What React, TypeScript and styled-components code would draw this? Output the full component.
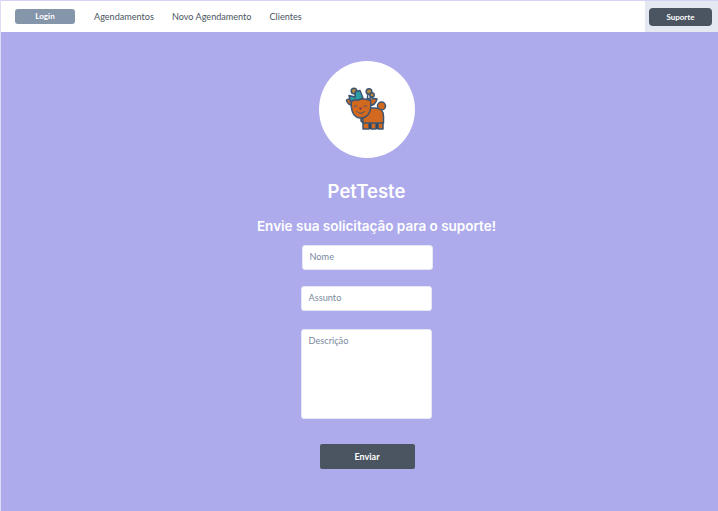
import { createGlobalStyle, styled } from 'styled-components';

const GlobalStyle = createGlobalStyle`
  html, body {
    margin: 0;
    padding: 0;
    background: #aeabec;
  }
  * {
    box-sizing: border-box;
  }
`;

const Page = styled.div`
  width: 718px;
  height: 511px;
  overflow: hidden;
  display: flex;
  flex-direction: column;
  background: #aeabec;
  border-left: 1px solid #dcdcf4;
  font-family: Lato, 'Liberation Sans', sans-serif;
`;

const Header = styled.header`
  height: 32px;
  flex: none;
  display: flex;
  align-items: stretch;
  background: #fff;
  border-top: 1px solid #d4d2f5;
`;

const Nav = styled.nav`
  flex: 1;
  display: flex;
  align-items: center;
  padding: 0 0 1px 14px;
`;

const LoginButton = styled.button`
  width: 60px;
  height: 15px;
  margin-right: 19px;
  padding: 0;
  border: 0;
  border-radius: 3px;
  background: #8696aa;
  color: #fff;
  font: 700 8px Lato, sans-serif;
`;

const NavLink = styled.a`
  margin-right: 18px;
  color: #4a5560;
  font-size: 9.1px;
  white-space: nowrap;
`;

const SupportBox = styled.div`
  width: 73px;
  display: flex;
  align-items: center;
  justify-content: center;
  padding-right: 2px;
  background: #e4e8f0;
`;

const SupportButton = styled.button`
  width: 63px;
  height: 18px;
  padding: 0;
  border: 0;
  border-radius: 4px;
  background: #4a5561;
  color: #fff;
  font: 700 8px Lato, sans-serif;
`;

const Main = styled.main`
  flex: 1;
  display: flex;
  flex-direction: column;
  align-items: center;
  padding: 29px 0 0 14px;
`;

const Avatar = styled.div`
  width: 96px;
  height: 97px;
  flex: none;
  display: flex;
  align-items: center;
  justify-content: center;
  border-radius: 50%;
  background: #fff;
`;

const Brand = styled.h1`
  margin: 21px 0 0;
  color: #fff;
  font: 600 18.5px/24px Inter, sans-serif;
`;

const Subtitle = styled.h2`
  margin: 13px 0 0 20px;
  color: #fff;
  font: 600 13.5px/20px Inter, sans-serif;
  white-space: nowrap;
`;

const Form = styled.form`
  width: 133px;
  display: flex;
  flex-direction: column;
  align-items: flex-start;
  margin: 9px 0 0 1px;
`;

const TextField = styled.input<{ $shift?: number }>`
  width: 131px;
  height: 25px;
  margin: 0 0 16px ${p => p.$shift ?? 0}px;
  padding: 0 7px 3px;
  border: 1px solid #e6e8f4;
  border-radius: 3px;
  background: #fff;
  font: 9.2px Lato, sans-serif;
  &::placeholder {
    color: #7a8a9e;
    opacity: 1;
  }
`;

const TextArea = styled.textarea`
  width: 131px;
  height: 90px;
  margin-top: 2px;
  padding: 5px 7px;
  border: 1px solid #e6e8f4;
  border-radius: 3px;
  background: #fff;
  resize: none;
  display: block;
  font: 9.2px Lato, sans-serif;
  &::placeholder {
    color: #7a8a9e;
    opacity: 1;
  }
`;

const SubmitButton = styled.button`
  width: 95px;
  height: 25px;
  margin: 25px 0 0 19px;
  padding: 0;
  border: 0;
  border-radius: 2px;
  background: #4a5561;
  color: #fff;
  font: 700 9px Lato, sans-serif;
`;

const DeerIcon = styled.svg`
  flex: none;
  margin-bottom: 3px;
`;

function Deer() {
  return (
    <DeerIcon width="44" height="46" viewBox="0 0 44 46" aria-hidden="true">
      <g stroke="#3c5572" strokeWidth="1.5" strokeLinejoin="round" strokeLinecap="round">
        {/* antlers */}
        <circle cx="9" cy="6" r="2.8" fill="#b98a3c" />
        <circle cx="12" cy="9" r="2" fill="#b98a3c" />
        <circle cx="24" cy="6.5" r="2.8" fill="#b98a3c" />
        <circle cx="27" cy="10" r="2.2" fill="#b98a3c" />
        <path d="M23 9 22 15M27 12 23 14" fill="none" />
        {/* tail */}
        <circle cx="36.5" cy="21" r="4" fill="#d2691f" />
        {/* legs */}
        <path d="M16 28H38V44H33V38H31V44H26V38H24V44H18V38L16 36z" fill="#d2691f" />
        <path d="M31 38.5h2V44h-2zM24 38.5h2V44h-2z" fill="#2f4660" stroke="none" />
        {/* body */}
        <path d="M17 23H30C35 23 38.5 26 38.5 31V38H18z" fill="#d2691f" />
        {/* ears */}
        <path d="M1.5 15c3-2 6-1 7.5 1l-1 4.5C5 20.500 1.500 18 1.500 15z" fill="#d2691f" />
        <path d="M32 14c-3-1-7 0-9 2l1 4.500c4 0 7-2 8-6.500z" fill="#d2691f" />
        {/* head */}
        <path d="M6.5 15.500C12 13 20 13 25.500 15.500 26.500 24 25 32.500 16 33 7.500 33 5.500 24 6.500 15.500z" fill="#d2691f" />
        {/* bow */}
        <path d="M11 14.500 5.500 16.500 4 10.500 10 12 10.500 6.500 15 5.500 18 13 12.500 15.500z" fill="#2a9fa6" />
      </g>
      <g fill="none" stroke="#3c5572" strokeWidth="1" strokeLinecap="round">
        <path d="M9 21.500c1-1 2.200-1 3 0M19 21.500c1-1 2.200-1 3 0" />
        <path d="M12 26.500c2 2.500 5.500 2.500 7.500 0" />
      </g>
      <path d="M13.800 22.800h3.400l-1.700 2.200z" fill="#7a2f5c" />
    </DeerIcon>
  );
}

export default function App() {
  return (
    <Page>
      <GlobalStyle />
      <Header>
        <Nav>
          <LoginButton type="button">Login</LoginButton>
          <NavLink>Agendamentos</NavLink>
          <NavLink>Novo Agendamento</NavLink>
          <NavLink>Clientes</NavLink>
        </Nav>
        <SupportBox>
          <SupportButton type="button">Suporte</SupportButton>
        </SupportBox>
      </Header>
      <Main>
        <Avatar>
          <Deer />
        </Avatar>
        <Brand>PetTeste</Brand>
        <Subtitle>Envie sua solicitação para o suporte!</Subtitle>
        <Form>
          <TextField $shift={1} placeholder="Nome" />
          <TextField placeholder="Assunto" />
          <TextArea placeholder="Descrição" />
          <SubmitButton type="button">Enviar</SubmitButton>
        </Form>
      </Main>
    </Page>
  );
}
